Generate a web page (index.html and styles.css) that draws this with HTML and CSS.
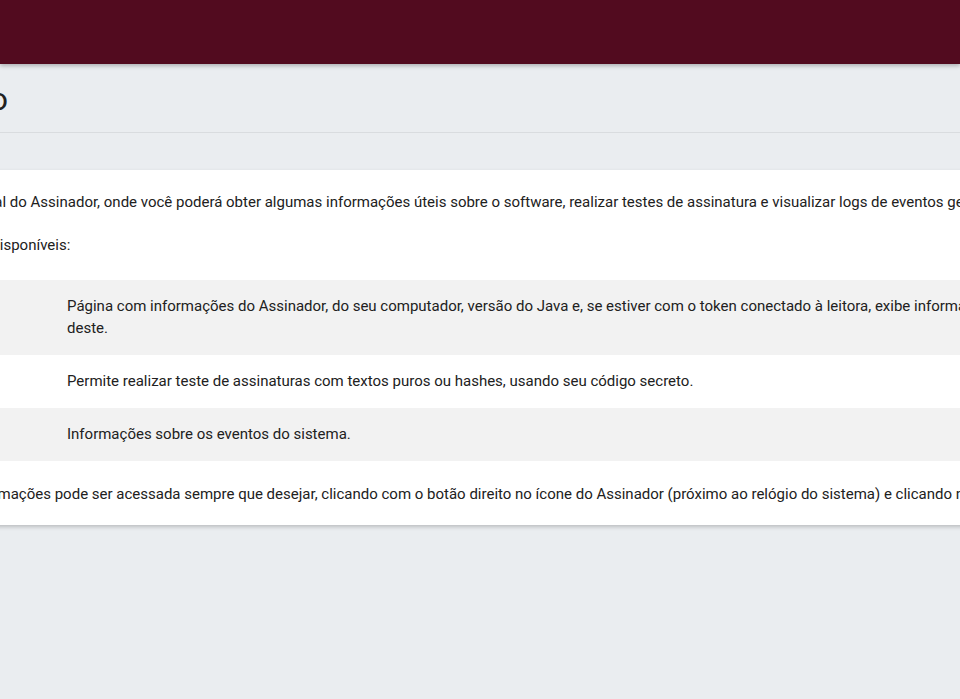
FILE: index.html
```html
<!DOCTYPE html>
<html lang="pt-BR">
<head>
<meta charset="utf-8">
<title>Assinador - Início</title>
<link rel="stylesheet" href="styles.css">
</head>
<body>
<header class="topbar"></header>
<main class="main">
  <div class="page-head">
    <h1 class="page-title">Início</h1>
  </div>
  <section class="card">
    <p class="lead">Bem-vindo à página inicial do Assinador, onde você poderá obter algumas informações úteis sobre o software, realizar testes de assinatura e visualizar logs de eventos gerados.</p>
    <p class="intro">Abaixo, veja as páginas disponíveis:</p>
    <div class="pages">
      <div class="row odd">
        <div class="name">Informações</div>
        <div class="desc">Página com informações do Assinador, do seu computador, versão do Java e, se estiver com o token conectado à leitora, exibe informações<br>deste.</div>
      </div>
      <div class="row">
        <div class="name">Testes</div>
        <div class="desc">Permite realizar teste de assinaturas com textos puros ou hashes, usando seu código secreto.</div>
      </div>
      <div class="row odd">
        <div class="name">Logs</div>
        <div class="desc">Informações sobre os eventos do sistema.</div>
      </div>
    </div>
    <p class="outro">Esta página com as informações pode ser acessada sempre que desejar, clicando com o botão direito no ícone do Assinador (próximo ao relógio do sistema) e clicando no item "Informações".</p>
  </section>
</main>
</body>
</html>
```
FILE: styles.css
```css
html, body {
  margin: 0;
  padding: 0;
  overflow: hidden;
}
body {
  background: #eaedf0;
  font-family: Roboto, "Liberation Sans", sans-serif;
  color: #212121;
  font-size: 15px;
  width: 960px;
  height: 699px;
}
.topbar {
  height: 64px;
  background: #520b1f;
  box-shadow: 0 2px 4px rgba(0, 0, 0, 0.25);
  position: relative;
  z-index: 1;
}
.main {
  margin-left: -188px;
  width: 1800px;
}
.page-head {
  height: 66px;
  padding-top: 2px;
  border-bottom: 1px solid #d9dcdf;
  display: flex;
  align-items: center;
  padding-left: 119px;
}
.page-title {
  margin: 0;
  font-size: 32px;
  font-weight: 400;
  color: #212121;
}
.card {
  margin-top: 37px;
  background: #fff;
  box-shadow: 0 2px 4px rgba(0, 0, 0, 0.2);
  padding: 21px 0 20px;
}
.card p {
  margin: 0;
  line-height: 22px;
  padding: 0 20px;
  white-space: nowrap;
}
.card .lead { margin-bottom: 21px; }
.card .intro { margin-bottom: 24px; }
.pages {
  margin-bottom: 22px;
}
.row {
  display: grid;
  grid-template-columns: 255px 1fr;
  align-items: center;
  line-height: 22px;
}
.row .name { padding-left: 20px; }
.row .desc {
  padding: 15px 0 16px;
  white-space: nowrap;
}
.row.odd { background: #f2f2f2; }
```
